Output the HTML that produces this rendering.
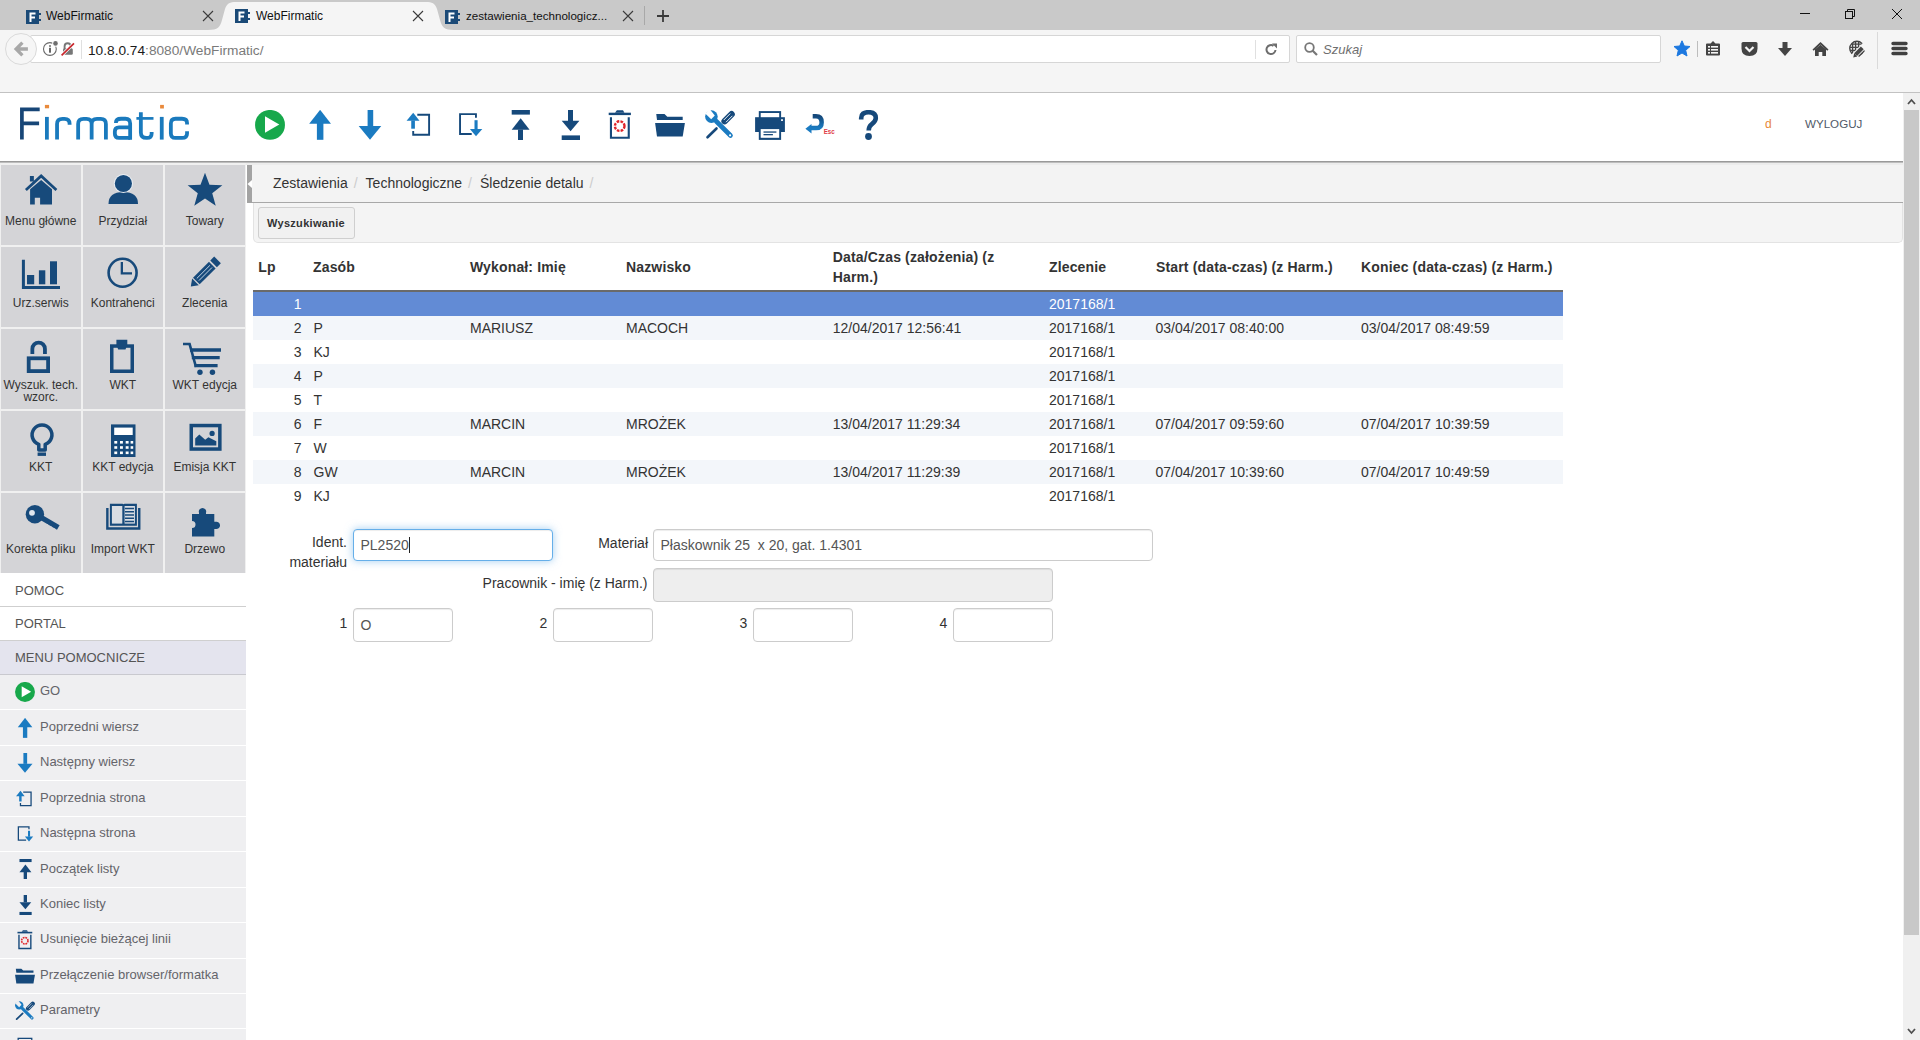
<!DOCTYPE html>
<html><head><meta charset="utf-8">
<style>
*{box-sizing:border-box;margin:0;padding:0}
html,body{width:1920px;height:1040px;overflow:hidden;background:#fff;font-family:"Liberation Sans",sans-serif;color:#333}
.a{position:absolute}
.t{position:absolute;white-space:nowrap}
svg{position:absolute;overflow:visible}
/* chrome */
#tabbar{left:0;top:0;width:1920px;height:30px;background:#c9c9c9}
#toolbar{left:0;top:30px;width:1920px;height:63px;background:#f5f5f5;border-bottom:1px solid #c2c2c2}
.tabtxt{font-size:12px;line-height:14px;color:#111}
/* header */
#hdrline{left:0;top:161px;width:1903px;height:2px;background:linear-gradient(#999 0,#999 50%,#bdbdbd 50%,#bdbdbd 100%)}
#hdrgap{left:0;top:163px;width:1903px;height:2px;background:#ececec}
/* scrollbar */
#sb{left:1903px;top:93px;width:17px;height:947px;background:#f0f0f0}
#sbthumb{left:1904px;top:110px;width:15px;height:825px;background:#c8c8c8}
/* sidebar */
#side{left:0;top:163px;width:246px;height:877px;background:#f0f0f0}
.tile{position:absolute;width:79.5px;height:79.5px;background:#d4d4d7}
.tl{position:absolute;left:0;width:100%;text-align:center;font-size:12px;line-height:12px;color:#333;white-space:nowrap}
.mrow{position:absolute;left:0;width:246px;font-size:13px;color:#555;white-space:nowrap}
.mi{position:absolute;left:0;width:246px;height:34.4px;background:#efeff1;font-size:13px;color:#5a5a5f;white-space:nowrap}
.mi span{position:absolute;left:40px;top:10px;line-height:14px}
/* content */
th,td{font-size:14px}
</style></head><body>

<!-- ============ BROWSER CHROME ============ -->
<div id="tabbar" class="a"></div>
<!-- active tab -->
<svg style="left:0;top:0" width="700" height="31" viewBox="0 0 700 31">
  <path d="M208 30 C218 30 220 27 222 20 L225 9 C227 3 230 2 236 2 L426 2 C432 2 435 3 437 9 L440 20 C442 27 444 30 454 30 Z" fill="#f5f5f5"/>
  <line x1="644.5" y1="6" x2="644.5" y2="25" stroke="#a8a8a8" stroke-width="1"/>
</svg>
<div id="toolbar" class="a"></div>

<!-- favicons -->
<svg style="left:26px;top:10px" width="15" height="14" viewBox="0 0 15 14"><rect x="0" y="0" width="13" height="14" fill="#1b4a77"/><rect x="13" y="3" width="2" height="2" fill="#1b4a77"/><rect x="13" y="9" width="2" height="2" fill="#1b4a77"/><path d="M3.5 2.5h6v2h-4v2h3.5v2h-3.5v3.5h-2z" fill="#fff"/></svg>
<svg style="left:235px;top:9px" width="15" height="14" viewBox="0 0 15 14"><rect x="0" y="0" width="13" height="14" fill="#1b4a77"/><rect x="13" y="3" width="2" height="2" fill="#1b4a77"/><rect x="13" y="9" width="2" height="2" fill="#1b4a77"/><path d="M3.5 2.5h6v2h-4v2h3.5v2h-3.5v3.5h-2z" fill="#fff"/></svg>
<svg style="left:445px;top:10px" width="15" height="14" viewBox="0 0 15 14"><rect x="0" y="0" width="13" height="14" fill="#1b4a77"/><rect x="13" y="3" width="2" height="2" fill="#1b4a77"/><rect x="13" y="9" width="2" height="2" fill="#1b4a77"/><path d="M3.5 2.5h6v2h-4v2h3.5v2h-3.5v3.5h-2z" fill="#fff"/></svg>
<div class="t tabtxt" style="left:46px;top:9px">WebFirmatic</div>
<div class="t tabtxt" style="left:256px;top:9px">WebFirmatic</div>
<div class="t tabtxt" style="left:466px;top:9px;font-size:11.6px">zestawienia_technologicz...</div>
<!-- tab close X -->
<svg style="left:203px;top:11px" width="10" height="10" viewBox="0 0 10 10"><path d="M0 0L10 10M10 0L0 10" stroke="#3a3a3a" stroke-width="1.1"/></svg>
<svg style="left:413px;top:11px" width="10" height="10" viewBox="0 0 10 10"><path d="M0 0L10 10M10 0L0 10" stroke="#3a3a3a" stroke-width="1.1"/></svg>
<svg style="left:623px;top:11px" width="10" height="10" viewBox="0 0 10 10"><path d="M0 0L10 10M10 0L0 10" stroke="#3a3a3a" stroke-width="1.1"/></svg>
<!-- new tab + -->
<svg style="left:656px;top:9px" width="14" height="14" viewBox="0 0 14 14"><path d="M7 1V13M1 7H13" stroke="#3a3a3a" stroke-width="1.8"/></svg>
<!-- window controls -->
<svg style="left:1800px;top:8px" width="104" height="12" viewBox="0 0 104 12">
  <line x1="0" y1="5.5" x2="10" y2="5.5" stroke="#111" stroke-width="1"/>
  <rect x="45.5" y="3.5" width="7" height="7" fill="none" stroke="#111" stroke-width="1"/>
  <path d="M47.5 3.5V1.5H54.5V8.5H52.5" fill="none" stroke="#111" stroke-width="1"/>
  <path d="M92 1L102 11M102 1L92 11" stroke="#111" stroke-width="1"/>
</svg>

<!-- nav bar -->
<div class="a" style="left:30px;top:35px;width:1260px;height:28px;background:#fff;border:1px solid #d6d6d6;border-radius:2px"></div>
<div class="a" style="left:5px;top:33px;width:32px;height:32px;border-radius:50%;background:#f6f6f6;border:1px solid #dadada"></div>
<svg style="left:13px;top:40px" width="16" height="18" viewBox="0 0 16 18"><path d="M14.9 9H4.5M9.4 2.6L3.1 9L9.4 15.4" fill="none" stroke="#a8a8a8" stroke-width="3.3"/></svg>
<svg style="left:43px;top:41px" width="34" height="18" viewBox="0 0 34 18">
  <circle cx="6.9" cy="8" r="6.4" fill="none" stroke="#6a6a6a" stroke-width="1.1"/>
  <circle cx="12.5" cy="2.4" r="3.3" fill="#fff"/>
  <circle cx="12.5" cy="2.4" r="2.3" fill="#6f6f6f"/>
  <rect x="6" y="4.3" width="2" height="1.4" fill="#666"/><rect x="6" y="6.8" width="2" height="4.9" fill="#666"/>
  <path d="M21.6 8V5.2Q21.6 2.3 24.6 2.3Q27.6 2.3 27.6 5.2V8" fill="none" stroke="#777" stroke-width="1.9"/>
  <rect x="20" y="7.5" width="9.8" height="6.3" rx="1.3" fill="#777"/>
  <path d="M18.3 14.6L31.2 2.2" stroke="#fff" stroke-width="3.2"/>
  <path d="M18.6 14.4L31 2.4" stroke="#c8262c" stroke-width="1.7"/>
</svg>
<div class="a" style="left:81px;top:40px;width:1px;height:19px;background:#e0e0e0"></div>
<div class="t" style="left:88px;top:43px;font-size:13.7px;line-height:16px;color:#1a1a1a">10.8.0.74<span style="color:#7a7a7a">:8080/WebFirmatic/</span></div>
<div class="a" style="left:1255px;top:40px;width:1px;height:19px;background:#e0e0e0"></div>
<svg style="left:1265px;top:43px" width="13" height="13" viewBox="0 0 13 13"><path d="M10.5 7A4.5 4.5 0 1 1 8.5 2.8" fill="none" stroke="#6d6d6d" stroke-width="2"/><path d="M7 0.5L12 0.5L12 5.5Z" fill="#6d6d6d"/></svg>
<div class="a" style="left:1296px;top:35px;width:365px;height:28px;background:#fff;border:1px solid #d6d6d6;border-radius:2px"></div>
<svg style="left:1304px;top:42px" width="14" height="14" viewBox="0 0 14 14"><circle cx="5.5" cy="5.5" r="4.3" fill="none" stroke="#777" stroke-width="1.8"/><line x1="8.5" y1="8.5" x2="13" y2="13" stroke="#777" stroke-width="2.2"/></svg>
<div class="t" style="left:1323px;top:42px;font-size:13px;line-height:16px;font-style:italic;color:#6f6f6f">Szukaj</div>
<!-- toolbar right icons -->
<svg style="left:1673px;top:40px" width="18" height="18" viewBox="0 0 18 18"><path d="M9 0.8 L11.3 6 L17 6.5 L12.7 10.3 L14 16 L9 13 L4 16 L5.3 10.3 L1 6.5 L6.7 6 Z" fill="#1c78e0" stroke="#1c78e0" stroke-width="1" stroke-linejoin="round"/></svg>
<div class="a" style="left:1697px;top:41px;width:1px;height:16px;background:#bdbdbd"></div>
<svg style="left:1705px;top:41px" width="16" height="16" viewBox="0 0 16 16"><path d="M1 3.5Q1 2.5 2 2.5H5.5L8 0L10.5 2.5H14Q15 2.5 15 3.5V13.5Q15 14.5 14 14.5H2Q1 14.5 1 13.5Z" fill="#444"/><rect x="3" y="5" width="2" height="1.6" fill="#f5f5f5"/><rect x="6" y="5" width="7" height="1.6" fill="#f5f5f5"/><rect x="3" y="8" width="2" height="1.6" fill="#f5f5f5"/><rect x="6" y="8" width="7" height="1.6" fill="#f5f5f5"/><rect x="3" y="11" width="2" height="1.6" fill="#f5f5f5"/><rect x="6" y="11" width="7" height="1.6" fill="#f5f5f5"/></svg>
<svg style="left:1741px;top:42px" width="17" height="15" viewBox="0 0 17 15"><path d="M0.5 1.5Q0.5 0 2 0H15Q16.5 0 16.5 1.5V6.5Q16.5 14 8.5 14Q0.5 14 0.5 6.5Z" fill="#444"/><path d="M4.5 5L8.5 9L12.5 5" fill="none" stroke="#f5f5f5" stroke-width="2.2"/></svg>
<svg style="left:1777px;top:42px" width="16" height="15" viewBox="0 0 16 15"><path d="M5.5 0H10.5V6H15L8 14L1 6H5.5Z" fill="#444"/></svg>
<svg style="left:1812px;top:41px" width="17" height="16" viewBox="0 0 17 16"><path d="M8.5 1L16.5 8.5L15.3 9.7L8.5 3.5L1.7 9.7L0.5 8.5Z" fill="#444"/><path d="M3 8.2L8.5 3.7L14 8.2V15H10.3V11H6.7V15H3Z" fill="#444"/></svg>
<svg style="left:1848px;top:40px" width="18" height="18" viewBox="0 0 18 18">
  <clipPath id="gclip"><circle cx="8.9" cy="8.4" r="7"/></clipPath>
  <circle cx="8.9" cy="8.4" r="7.1" fill="none" stroke="#444" stroke-width="1.4"/>
  <g clip-path="url(#gclip)" stroke="#444" stroke-width="1.4"><path d="M4.6 0V18M7.6 0V18M10.6 0V18M0 4.1H18M0 7.4H18M0 10.5H18"/></g>
  <path d="M3 19.5L18 4.5" stroke="#f5f5f5" stroke-width="6.5"/>
  <path d="M10.6 16.5L16.5 10.6" stroke="#444" stroke-width="1.3"/>
  <path d="M7.6 14.6L14.3 7.9" stroke="#444" stroke-width="4"/>
  <path d="M5.2 17.6L6.2 13.3L9.3 16.4Z" fill="#444"/>
</svg>
<div class="a" style="left:1877px;top:32px;width:1px;height:37px;background:#dadada"></div>
<svg style="left:1891px;top:41px" width="17" height="15" viewBox="0 0 17 15"><path d="M2 2.5H15M2 7.5H15M2 12.5H15" stroke="#3f3f3f" stroke-width="3.4" stroke-linecap="round"/></svg>

<!-- ============ PAGE ============ -->
<div id="sb" class="a"></div>
<div id="sbthumb" class="a"></div>
<svg style="left:1907px;top:98px" width="9" height="7" viewBox="0 0 9 7"><path d="M1 6L4.5 2L8 6" fill="none" stroke="#505050" stroke-width="1.8"/></svg>
<svg style="left:1907px;top:1028px" width="9" height="7" viewBox="0 0 9 7"><path d="M1 1L4.5 5L8 1" fill="none" stroke="#505050" stroke-width="1.8"/></svg>

<div id="hdrline" class="a"></div>
<div id="hdrgap" class="a"></div>


<!-- ============ APP HEADER ============ -->
<svg style="left:0;top:0" width="900" height="160" viewBox="0 0 900 160">
  <g fill="none" stroke-width="3.8">
    <path d="M21.9 139.6V109.4H39.7M21.9 123.4H39.1" stroke="#174677" stroke-width="3.7"/>
    <g stroke="#1a7abd">
      <path d="M46.9 116.9V139.6"/>
      <path d="M57.05 139.6V124Q57.05 118.8 62.5 118.8H64.5Q69.6 118.8 69.6 123.8V124.7"/>
      <path d="M78.15 139.6V124Q78.15 118.8 83.5 118.8H86.5Q91.65 118.8 91.65 124V139.6M91.65 124Q91.65 118.8 97 118.8H100.8Q105.9 118.8 105.9 124V139.6"/>
      <path d="M115.95 123V122.5Q115.95 118.75 121 118.75H125.5Q130.15 118.75 130.15 123.5V139.85"/>
      <path d="M130.15 127.35H119Q114.85 127.35 114.85 131.5V133.8Q114.85 137.95 119 137.95H130.15"/>
      <path d="M140.85 112.2V132.5Q140.85 137.95 146.5 137.95H147Q151.65 137.95 151.65 133.5V131.9"/>
      <path d="M136.4 118.4H153.5" stroke-width="2.7"/>
      <path d="M161.75 116.9V139.6"/>
      <path d="M187.05 124.6V123Q187.05 118.75 182 118.75H175.5Q170.85 118.75 170.85 123.5V133.2Q170.85 137.95 175.5 137.95H182Q187.05 137.95 187.05 133.5V131.2"/>
    </g>
  </g>
  <rect x="44.9" y="104.9" width="4.2" height="3.4" fill="#e98a3c"/>
  <rect x="160.1" y="104.9" width="3.8" height="3.6" fill="#e98a3c"/>
</svg>

<svg width="0" height="0" style="position:absolute">
 <defs>
  <symbol id="i-go" viewBox="0 0 30 30"><circle cx="15" cy="14.9" r="14.95" fill="#17a84b"/><path d="M10 6.3L24.3 14.6L10 22.7Z" fill="#fff"/></symbol>
  <symbol id="i-up" viewBox="0 0 30 30"><path d="M4.2 13.7L15.1 -0.2L26 13.7Z" fill="#1b7bc1"/><rect x="11.9" y="13" width="6.5" height="16.8" fill="#1b7bc1"/></symbol>
  <symbol id="i-down" viewBox="0 0 30 30"><rect x="12.6" y="-0.2" width="5.6" height="16.5" fill="#1b7bc1"/><path d="M3.7 16L26.25 16L15 29.8Z" fill="#1b7bc1"/></symbol>
  <symbol id="i-pgup" viewBox="0 0 30 30"><path d="M12.3 4.8H24.1V24.8H8.2V21" fill="none" stroke="#16497b" stroke-width="1.9"/><path d="M1.6 10.7L8.2 2.7L14.5 10.7Z" fill="#1b7bc1"/><rect x="6.25" y="10.5" width="3.65" height="8.2" fill="#1b7bc1"/></symbol>
  <symbol id="i-pgdn" viewBox="0 0 30 30"><path d="M20.95 7.7V4.15H5.05V24.05H16.7" fill="none" stroke="#16497b" stroke-width="1.9"/><rect x="19.5" y="10.2" width="3.1" height="8.9" fill="#1b7bc1"/><path d="M14.9 18.9L27.3 18.9L21 26.2Z" fill="#1b7bc1"/></symbol>
  <symbol id="i-top" viewBox="0 0 30 30"><rect x="6.7" y="-0.1" width="18.2" height="4.7" fill="#16497b"/><path d="M6.7 19.7L15.65 8.2L24.6 19.7Z" fill="#16497b"/><rect x="13" y="19.5" width="5" height="10.5" fill="#16497b"/></symbol>
  <symbol id="i-end" viewBox="0 0 30 30"><rect x="13" y="0" width="5" height="11" fill="#16497b"/><path d="M6.7 10.8L24.4 10.8L15.55 21.25Z" fill="#16497b"/><rect x="6.7" y="25.4" width="18.3" height="4.6" fill="#16497b"/></symbol>
  <symbol id="i-trash" viewBox="0 0 30 30"><path d="M10 2.75L11.9 0.2H18L19.4 2.75Z" fill="#16497b"/><rect x="3.7" y="2.7" width="22.2" height="2.4" fill="#16497b"/><path d="M5.95 7.2V27.7H23.75V7.2" fill="none" stroke="#16497b" stroke-width="2.1"/><circle cx="14.7" cy="16.1" r="4.8" fill="none" stroke="#e0252a" stroke-width="2.4" stroke-dasharray="2.6 1.2"/></symbol>
  <symbol id="i-folder" viewBox="0 0 30 30"><path d="M1.25 4.1H9.5L12.3 6.7H27.7V10H2Z" fill="#16497b"/><path d="M0.1 13H29.9L27.7 26.4H2Z" fill="#16497b"/></symbol>
  <symbol id="i-tools" viewBox="0 0 30 30">
    <mask id="wmask" maskUnits="userSpaceOnUse" x="-5" y="-5" width="40" height="40"><rect x="-5" y="-5" width="40" height="40" fill="#fff"/><path d="M4.6 -1L0.2 3.4L6.2 9.2L9.8 5.6Z" fill="#000"/><circle cx="25.1" cy="25.3" r="1.1" fill="#000"/></mask>
    <mask id="smask" maskUnits="userSpaceOnUse" x="-5" y="-5" width="40" height="40"><rect x="-5" y="-5" width="40" height="40" fill="#fff"/><path d="M18.8 10L25.2 3.6M21 12.2L27.4 5.8" stroke="#000" stroke-width="0.9"/></mask>
    <path d="M2.5 27.3L11.5 18.5" stroke="#16497b" stroke-width="2.6" stroke-linecap="round"/>
    <path d="M19.6 11.2L26.6 4.2" stroke="#16497b" stroke-width="6.4" stroke-linecap="round" mask="url(#smask)"/>
    <g mask="url(#wmask)" fill="#1b7bc1"><path d="M11 11L25.5 25.5" stroke="#1b7bc1" stroke-width="4.6" stroke-linecap="round"/><circle cx="6.4" cy="6.6" r="6.3"/></g>
  </symbol>
  <symbol id="i-print" viewBox="0 0 30 30"><rect x="4.75" y="2.05" width="20.4" height="7" fill="none" stroke="#16497b" stroke-width="1.9"/><rect x="0.1" y="7.2" width="29.8" height="14.8" fill="#16497b"/><rect x="26.1" y="9.2" width="1.8" height="1.8" fill="#fff"/><rect x="3.8" y="18" width="22.3" height="11.9" fill="#16497b"/><rect x="5.7" y="19.1" width="18.5" height="8.7" fill="#fff"/><rect x="8.5" y="21.4" width="12.9" height="1.3" fill="#16497b"/><rect x="8.5" y="24" width="9.4" height="1.3" fill="#16497b"/></symbol>
  <linearGradient id="ug" x1="0" y1="0" x2="0" y2="1"><stop offset="0" stop-color="#16497b"/><stop offset="1" stop-color="#1b7bc1"/></linearGradient>
  <symbol id="i-undo" viewBox="0 0 30 30" overflow="visible"><path d="M7.7 6.35H11Q16.65 6.35 16.65 12.4Q16.65 18.05 11 18.05H6" fill="none" stroke="url(#ug)" stroke-width="4.5"/><path d="M0.4 18.7L6.5 14L6.5 23.6Z" fill="#1b7bc1"/><text x="18.7" y="24.3" font-family="Liberation Sans" font-weight="bold" font-size="6.6" fill="#e03a45" textLength="11" lengthAdjust="spacingAndGlyphs">Esc</text></symbol>
  <symbol id="i-help" viewBox="0 0 30 30"><path d="M6.2 9.6V8Q6.2 2.2 13.5 2.2Q20.8 2.2 20.8 8Q20.8 11.3 16.6 14.4Q13.7 16.6 13.7 20.6" fill="none" stroke="#16497b" stroke-width="4.6"/><circle cx="13.5" cy="26.5" r="3.4" fill="#16497b"/></symbol>
 </defs>
</svg>
<svg style="left:255px;top:110px" width="30" height="30"><use href="#i-go"/></svg>
<svg style="left:305px;top:110px" width="30" height="30"><use href="#i-up"/></svg>
<svg style="left:355px;top:110px" width="30" height="30"><use href="#i-down"/></svg>
<svg style="left:405px;top:110px" width="30" height="30"><use href="#i-pgup"/></svg>
<svg style="left:455px;top:110px" width="30" height="30"><use href="#i-pgdn"/></svg>
<svg style="left:505px;top:110px" width="30" height="30"><use href="#i-top"/></svg>
<svg style="left:555px;top:110px" width="30" height="30"><use href="#i-end"/></svg>
<svg style="left:605px;top:110px" width="30" height="30"><use href="#i-trash"/></svg>
<svg style="left:655px;top:110px" width="30" height="30"><use href="#i-folder"/></svg>
<svg style="left:705px;top:110px" width="30" height="30"><use href="#i-tools"/></svg>
<svg style="left:755px;top:110px" width="30" height="30"><use href="#i-print"/></svg>
<svg style="left:805px;top:110px" width="30" height="30"><use href="#i-undo"/></svg>
<svg style="left:855px;top:110px" width="30" height="30"><use href="#i-help"/></svg>

<div class="t" style="left:1765px;top:116.7px;font-size:12px;line-height:14px;color:#e8873a">d</div>
<div class="t" style="left:1805px;top:116.7px;font-size:11.6px;line-height:14px;color:#505a68">WYLOGUJ</div>

<!-- ============ SIDEBAR ============ -->
<div id="side" class="a"></div>
<div class="tile" style="left:1px;top:165px"><div class="tl" style="top:50px">Menu główne</div></div>
<div class="tile" style="left:83px;top:165px"><div class="tl" style="top:50px">Przydział</div></div>
<div class="tile" style="left:165px;top:165px"><div class="tl" style="top:50px">Towary</div></div>
<div class="tile" style="left:1px;top:247px"><div class="tl" style="top:50px">Urz.serwis</div></div>
<div class="tile" style="left:83px;top:247px"><div class="tl" style="top:50px">Kontrahenci</div></div>
<div class="tile" style="left:165px;top:247px"><div class="tl" style="top:50px">Zlecenia</div></div>
<div class="tile" style="left:1px;top:329px"><div class="tl" style="top:49.8px;line-height:12.6px">Wyszuk. tech.<br>wzorc.</div></div>
<div class="tile" style="left:83px;top:329px"><div class="tl" style="top:50px">WKT</div></div>
<div class="tile" style="left:165px;top:329px"><div class="tl" style="top:50px">WKT edycja</div></div>
<div class="tile" style="left:1px;top:411px"><div class="tl" style="top:50px">KKT</div></div>
<div class="tile" style="left:83px;top:411px"><div class="tl" style="top:50px">KKT edycja</div></div>
<div class="tile" style="left:165px;top:411px"><div class="tl" style="top:50px">Emisja KKT</div></div>
<div class="tile" style="left:1px;top:493px"><div class="tl" style="top:50px">Korekta pliku</div></div>
<div class="tile" style="left:83px;top:493px"><div class="tl" style="top:50px">Import WKT</div></div>
<div class="tile" style="left:165px;top:493px"><div class="tl" style="top:50px">Drzewo</div></div>
<svg style="left:0;top:0" width="246" height="580" viewBox="0 0 246 580">
 <g fill="#174a7b">
  <!-- home -->
  <path d="M25.9 189.9L41.15 175.9L56.4 189.9" fill="none" stroke="#174a7b" stroke-width="2.7"/>
  <rect x="29.9" y="176" width="3.95" height="5.5"/>
  <path d="M30.1 189.2L41.15 180L52 189.2V204.4H40.1V197.7H34.8V204.4H30.1Z"/>
  <!-- person -->
  <path d="M108.5 203.9Q108.5 192 123.25 192Q138 192 138 203.9Z"/>
  <circle cx="123.4" cy="183.5" r="9.6" fill="#e9eef3"/>
  <circle cx="123.4" cy="183.5" r="8.6"/>
  <!-- star -->
  <path d="M205.00 172.70 L209.47 184.79 L222.35 185.30 L212.23 193.29 L215.72 205.70 L205.00 198.54 L194.28 205.70 L197.77 193.29 L187.65 185.30 L200.53 184.79Z"/>
  <!-- chart -->
  <path d="M23.4 259.8V287.6H60" fill="none" stroke="#174a7b" stroke-width="3"/>
  <rect x="27" y="275" width="7.2" height="9.3"/><rect x="38.9" y="270.3" width="6.4" height="14"/><rect x="50" y="261.3" width="7" height="23"/>
  <!-- clock -->
  <circle cx="122.6" cy="272.7" r="14" fill="none" stroke="#174a7b" stroke-width="2.6"/>
  <path d="M121.85 262V273.45H132" fill="none" stroke="#174a7b" stroke-width="2.3"/>
  <!-- pencil -->
  <g transform="translate(190.8 286.6) rotate(-45)">
    <path d="M0 0L6.6 -4.7V4.7Z"/>
    <rect x="7.85" y="-4.7" width="22.55" height="9.4"/>
    <rect x="32.2" y="-4.7" width="5.6" height="9.4"/>
    <path d="M10 -1.5H28.5M10 1.5H28.5" stroke="#cddbea" stroke-width="0.9"/>
  </g>
  <!-- lock -->
  <path d="M32.35 354V348.9A6.3 6.3 0 0 1 44.95 348.9V354" fill="none" stroke="#174a7b" stroke-width="3.8"/>
  <rect x="28.7" y="358.3" width="19.4" height="12.8" fill="none" stroke="#174a7b" stroke-width="3.8"/>
  <!-- clipboard -->
  <rect x="111.75" y="346.05" width="20.5" height="25.2" fill="none" stroke="#174a7b" stroke-width="3.5"/>
  <path d="M116.4 339.8H127.3V344.5L125.5 349.4H118.2L116.4 344.5Z"/>
  <!-- cart -->
  <path d="M183 344.05H189.6L196 367" fill="none" stroke="#174a7b" stroke-width="2.6"/>
  <path d="M190 350H221M191.8 357.7H219.7M194.4 365.6H217.6" fill="none" stroke="#174a7b" stroke-width="3.3"/>
  <circle cx="199.95" cy="372.25" r="2.7"/><circle cx="212.45" cy="372.25" r="2.7"/>
  <!-- bulb -->
  <path d="M38.8 449.9V444.3A9.9 9.9 0 1 1 45.2 444.3V449.9Z" fill="none" stroke="#174a7b" stroke-width="3.5" stroke-linejoin="round"/>
  <rect x="37.6" y="452.5" width="8.4" height="3.4"/>
  <!-- calculator -->
  <rect x="111" y="424.4" width="24.5" height="32.6"/>
  <rect x="114.2" y="427.6" width="18.5" height="7.4" fill="#fff"/>
  <g fill="#fff">
   <rect x="114.3" y="441" width="2.9" height="2.6"/><rect x="120" y="441" width="2.9" height="2.6"/><rect x="125.7" y="441" width="2.9" height="2.6"/><rect x="130.6" y="441" width="2.6" height="2.6"/>
   <rect x="114.3" y="446.2" width="2.9" height="2.6"/><rect x="120" y="446.2" width="2.9" height="2.6"/><rect x="125.7" y="446.2" width="2.9" height="2.6"/><rect x="130.6" y="446.2" width="2.6" height="2.6"/>
   <rect x="114.3" y="451.5" width="2.9" height="2.6"/><rect x="120" y="451.5" width="2.9" height="2.6"/><rect x="125.7" y="451.5" width="2.9" height="2.6"/><rect x="130.6" y="451.5" width="2.6" height="2.6"/>
  </g>
  <!-- picture -->
  <rect x="191.25" y="425.55" width="28.6" height="23.5" fill="none" stroke="#174a7b" stroke-width="3.5"/>
  <path d="M195.2 445.5V438.5L199.3 434.6L205.2 439.8L208.4 437.2L216.3 441.2V445.5Z"/>
  <circle cx="212.1" cy="433.4" r="2.6"/>
  <!-- key -->
  <circle cx="34.9" cy="514.3" r="9.2"/>
  <circle cx="32" cy="512.8" r="2.9" fill="#dfe6ee"/>
  <path d="M40 516.8L58.3 527.6" stroke="#174a7b" stroke-width="5.2"/>
  <path d="M47.3 524.3V526M50.8 526.3V528M54.5 528.5V530" stroke="#d4d4d7" stroke-width="1.3"/>
  <!-- book -->
  <path d="M107.35 508V528.45H139.25V508" fill="none" stroke="#174a7b" stroke-width="2.4"/>
  <path d="M109.9 503.8H122.5Q123.5 504.6 124.5 503.8H136.9V525.7H109.9Z"/>
  <rect x="111.9" y="506" width="10.4" height="17.6" fill="#d9dde3"/>
  <rect x="124.6" y="506" width="10.3" height="17.6" fill="#d9dde3"/>
  <path d="M125 508.6H134M125 511.8H134M125 515.05H134M125 518.3H134M125 521.5H134" stroke="#174a7b" stroke-width="1.5"/>
  <!-- puzzle -->
  <path d="M192 514H199V512.8A3.7 3.7 0 1 1 206 512.8V514H214.3V521.8H215.5A3.7 3.7 0 1 1 215.5 529H214.3V536.4H192V528A3.5 3.5 0 1 0 192 521Z"/>
 </g>
</svg>

<div class="a" style="left:0;top:573px;width:246px;height:467px;background:#fff"></div>
<div class="a" style="left:0;top:573px;width:246px;height:34px;background:#fff;border-bottom:1px solid #cfcfcf"></div>
<div class="t" style="left:15px;top:583px;font-size:13px;line-height:15px;color:#555">POMOC</div>
<div class="a" style="left:0;top:607px;width:246px;height:34px;background:#fff;border-bottom:1px solid #cfcfcf"></div>
<div class="t" style="left:15px;top:615.5px;font-size:13px;line-height:15px;color:#555">PORTAL</div>
<div class="a" style="left:0;top:641px;width:246px;height:34px;background:#e4e4ee;border-bottom:1px solid #c9c9cf"></div>
<div class="t" style="left:15px;top:649.6px;font-size:13px;line-height:15px;color:#555">MENU POMOCNICZE</div>
<div class="a" style="left:0;top:675.00px;width:246px;height:34.44px;background:#efeff1"></div>
<svg style="left:15px;top:682.20px" width="20" height="20" viewBox="0 0 30 30"><use href="#i-go"/></svg>
<div class="t" style="left:40px;top:683.30px;font-size:13px;line-height:15px;color:#64646a">GO</div>
<div class="a" style="left:0;top:710.44px;width:246px;height:34.44px;background:#efeff1"></div>
<svg style="left:15px;top:717.64px" width="20" height="20" viewBox="0 0 30 30"><use href="#i-up"/></svg>
<div class="t" style="left:40px;top:718.74px;font-size:13px;line-height:15px;color:#64646a">Poprzedni wiersz</div>
<div class="a" style="left:0;top:745.88px;width:246px;height:34.44px;background:#efeff1"></div>
<svg style="left:15px;top:753.08px" width="20" height="20" viewBox="0 0 30 30"><use href="#i-down"/></svg>
<div class="t" style="left:40px;top:754.18px;font-size:13px;line-height:15px;color:#64646a">Następny wiersz</div>
<div class="a" style="left:0;top:781.32px;width:246px;height:34.44px;background:#efeff1"></div>
<svg style="left:15px;top:788.52px" width="20" height="20" viewBox="0 0 30 30"><use href="#i-pgup"/></svg>
<div class="t" style="left:40px;top:789.62px;font-size:13px;line-height:15px;color:#64646a">Poprzednia strona</div>
<div class="a" style="left:0;top:816.76px;width:246px;height:34.44px;background:#efeff1"></div>
<svg style="left:15px;top:823.96px" width="20" height="20" viewBox="0 0 30 30"><use href="#i-pgdn"/></svg>
<div class="t" style="left:40px;top:825.06px;font-size:13px;line-height:15px;color:#64646a">Następna strona</div>
<div class="a" style="left:0;top:852.20px;width:246px;height:34.44px;background:#efeff1"></div>
<svg style="left:15px;top:859.40px" width="20" height="20" viewBox="0 0 30 30"><use href="#i-top"/></svg>
<div class="t" style="left:40px;top:860.50px;font-size:13px;line-height:15px;color:#64646a">Początek listy</div>
<div class="a" style="left:0;top:887.64px;width:246px;height:34.44px;background:#efeff1"></div>
<svg style="left:15px;top:894.84px" width="20" height="20" viewBox="0 0 30 30"><use href="#i-end"/></svg>
<div class="t" style="left:40px;top:895.94px;font-size:13px;line-height:15px;color:#64646a">Koniec listy</div>
<div class="a" style="left:0;top:923.08px;width:246px;height:34.44px;background:#efeff1"></div>
<svg style="left:15px;top:930.28px" width="20" height="20" viewBox="0 0 30 30"><use href="#i-trash"/></svg>
<div class="t" style="left:40px;top:931.38px;font-size:13px;line-height:15px;color:#64646a">Usunięcie bieżącej linii</div>
<div class="a" style="left:0;top:958.52px;width:246px;height:34.44px;background:#efeff1"></div>
<svg style="left:15px;top:965.72px" width="20" height="20" viewBox="0 0 30 30"><use href="#i-folder"/></svg>
<div class="t" style="left:40px;top:966.82px;font-size:13px;line-height:15px;color:#64646a">Przełączenie browser/formatka</div>
<div class="a" style="left:0;top:993.96px;width:246px;height:34.44px;background:#efeff1"></div>
<svg style="left:15px;top:1001.16px" width="20" height="20" viewBox="0 0 30 30"><use href="#i-tools"/></svg>
<div class="t" style="left:40px;top:1002.26px;font-size:13px;line-height:15px;color:#64646a">Parametry</div>
<div class="a" style="left:0;top:1029.40px;width:246px;height:34.44px;background:#efeff1"></div>
<svg style="left:15px;top:1036.60px" width="20" height="20" viewBox="0 0 30 30"><use href="#i-print"/></svg>
<div class="t" style="left:40px;top:1037.70px;font-size:13px;line-height:15px;color:#64646a">Drukuj</div>


<!-- ============ CONTENT ============ -->
<div class="a" style="left:246px;top:165px;width:1657px;height:875px;background:#fff"></div>
<div class="a" style="left:252px;top:165px;width:1651px;height:38px;background:#f3f3f3;border-bottom:1px solid #a8a8a8"></div>
<div class="a" style="left:247px;top:165px;width:5px;height:38px;background:#a3a3a3"></div>
<svg style="left:246px;top:179px" width="7" height="10" viewBox="0 0 7 10"><path d="M6 1L1.5 5L6 9Z" fill="#fff"/></svg>
<div class="t" style="left:273px;top:173px;font-size:14px;line-height:20px;color:#333">Zestawienia<span style="color:#ccc;padding:0 8px 0 6px">/</span>Technologiczne<span style="color:#ccc;padding:0 8px 0 6px">/</span>Śledzenie detalu<span style="color:#ccc;padding:0 8px 0 6px">/</span></div>
<div class="a" style="left:253px;top:203px;width:1650px;height:40px;background:#f4f4f4;border:1px solid #e3e3e3;border-top:none;border-radius:0 0 5px 5px"></div>
<div class="a" style="left:258px;top:207px;width:97px;height:32px;background:#f1f1f1;border:1px solid #cfcfcf;border-radius:3px"></div>
<div class="t" style="left:267px;top:215.5px;font-size:11px;line-height:14px;font-weight:bold;color:#333;letter-spacing:0.3px">Wyszukiwanie</div>

<!-- table -->
<div class="a" style="left:253px;top:290px;width:1310px;height:2px;background:#6a6a6a"></div>
<div class="t" style="left:258.3px;top:256.95px;font-size:14px;line-height:20px;font-weight:bold;color:#333;letter-spacing:0.15px">Lp</div>
<div class="t" style="left:313px;top:256.95px;font-size:14px;line-height:20px;font-weight:bold;color:#333;letter-spacing:0.15px">Zasób</div>
<div class="t" style="left:470px;top:256.95px;font-size:14px;line-height:20px;font-weight:bold;color:#333;letter-spacing:0.15px">Wykonał: Imię</div>
<div class="t" style="left:626px;top:256.95px;font-size:14px;line-height:20px;font-weight:bold;color:#333;letter-spacing:0.15px">Nazwisko</div>
<div class="t" style="left:1049px;top:256.95px;font-size:14px;line-height:20px;font-weight:bold;color:#333;letter-spacing:0.15px">Zlecenie</div>
<div class="t" style="left:1156px;top:256.95px;font-size:14px;line-height:20px;font-weight:bold;color:#333;letter-spacing:0.15px">Start (data-czas) (z Harm.)</div>
<div class="t" style="left:1361px;top:256.95px;font-size:14px;line-height:20px;font-weight:bold;color:#333;letter-spacing:0.15px">Koniec (data-czas) (z Harm.)</div>
<div class="t" style="left:832.8px;top:247.05px;font-size:14px;line-height:20.3px;font-weight:bold;color:#333;letter-spacing:0.15px">Data/Czas (założenia) (z<br>Harm.)</div>
<div class="a" style="left:253px;top:292px;width:1310px;height:24px;background:#628bd5"></div>
<div class="t" style="left:253px;width:48.6px;text-align:right;top:294.00px;font-size:14px;line-height:20px;color:#fff">1</div>
<div class="t" style="left:1049px;top:294.00px;font-size:14px;line-height:20px;color:#fff">2017168/1</div>
<div class="a" style="left:253px;top:316px;width:1310px;height:24px;background:#f3f6fa"></div>
<div class="t" style="left:253px;width:48.6px;text-align:right;top:318.00px;font-size:14px;line-height:20px;color:#333">2</div>
<div class="t" style="left:313.5px;top:318.00px;font-size:14px;line-height:20px;color:#333">P</div>
<div class="t" style="left:470px;top:318.00px;font-size:14px;line-height:20px;color:#333">MARIUSZ</div>
<div class="t" style="left:626px;top:318.00px;font-size:14px;line-height:20px;color:#333">MACOCH</div>
<div class="t" style="left:832.8px;top:318.00px;font-size:14px;line-height:20px;color:#333">12/04/2017 12:56:41</div>
<div class="t" style="left:1049px;top:318.00px;font-size:14px;line-height:20px;color:#333">2017168/1</div>
<div class="t" style="left:1155.5px;top:318.00px;font-size:14px;line-height:20px;color:#333">03/04/2017 08:40:00</div>
<div class="t" style="left:1361px;top:318.00px;font-size:14px;line-height:20px;color:#333">03/04/2017 08:49:59</div>
<div class="a" style="left:253px;top:340px;width:1310px;height:24px;background:#fff"></div>
<div class="t" style="left:253px;width:48.6px;text-align:right;top:342.00px;font-size:14px;line-height:20px;color:#333">3</div>
<div class="t" style="left:313.5px;top:342.00px;font-size:14px;line-height:20px;color:#333">KJ</div>
<div class="t" style="left:1049px;top:342.00px;font-size:14px;line-height:20px;color:#333">2017168/1</div>
<div class="a" style="left:253px;top:364px;width:1310px;height:24px;background:#f3f6fa"></div>
<div class="t" style="left:253px;width:48.6px;text-align:right;top:366.00px;font-size:14px;line-height:20px;color:#333">4</div>
<div class="t" style="left:313.5px;top:366.00px;font-size:14px;line-height:20px;color:#333">P</div>
<div class="t" style="left:1049px;top:366.00px;font-size:14px;line-height:20px;color:#333">2017168/1</div>
<div class="a" style="left:253px;top:388px;width:1310px;height:24px;background:#fff"></div>
<div class="t" style="left:253px;width:48.6px;text-align:right;top:390.00px;font-size:14px;line-height:20px;color:#333">5</div>
<div class="t" style="left:313.5px;top:390.00px;font-size:14px;line-height:20px;color:#333">T</div>
<div class="t" style="left:1049px;top:390.00px;font-size:14px;line-height:20px;color:#333">2017168/1</div>
<div class="a" style="left:253px;top:412px;width:1310px;height:24px;background:#f3f6fa"></div>
<div class="t" style="left:253px;width:48.6px;text-align:right;top:414.00px;font-size:14px;line-height:20px;color:#333">6</div>
<div class="t" style="left:313.5px;top:414.00px;font-size:14px;line-height:20px;color:#333">F</div>
<div class="t" style="left:470px;top:414.00px;font-size:14px;line-height:20px;color:#333">MARCIN</div>
<div class="t" style="left:626px;top:414.00px;font-size:14px;line-height:20px;color:#333">MROŻEK</div>
<div class="t" style="left:832.8px;top:414.00px;font-size:14px;line-height:20px;color:#333">13/04/2017 11:29:34</div>
<div class="t" style="left:1049px;top:414.00px;font-size:14px;line-height:20px;color:#333">2017168/1</div>
<div class="t" style="left:1155.5px;top:414.00px;font-size:14px;line-height:20px;color:#333">07/04/2017 09:59:60</div>
<div class="t" style="left:1361px;top:414.00px;font-size:14px;line-height:20px;color:#333">07/04/2017 10:39:59</div>
<div class="a" style="left:253px;top:436px;width:1310px;height:24px;background:#fff"></div>
<div class="t" style="left:253px;width:48.6px;text-align:right;top:438.00px;font-size:14px;line-height:20px;color:#333">7</div>
<div class="t" style="left:313.5px;top:438.00px;font-size:14px;line-height:20px;color:#333">W</div>
<div class="t" style="left:1049px;top:438.00px;font-size:14px;line-height:20px;color:#333">2017168/1</div>
<div class="a" style="left:253px;top:460px;width:1310px;height:24px;background:#f3f6fa"></div>
<div class="t" style="left:253px;width:48.6px;text-align:right;top:462.00px;font-size:14px;line-height:20px;color:#333">8</div>
<div class="t" style="left:313.5px;top:462.00px;font-size:14px;line-height:20px;color:#333">GW</div>
<div class="t" style="left:470px;top:462.00px;font-size:14px;line-height:20px;color:#333">MARCIN</div>
<div class="t" style="left:626px;top:462.00px;font-size:14px;line-height:20px;color:#333">MROŻEK</div>
<div class="t" style="left:832.8px;top:462.00px;font-size:14px;line-height:20px;color:#333">13/04/2017 11:29:39</div>
<div class="t" style="left:1049px;top:462.00px;font-size:14px;line-height:20px;color:#333">2017168/1</div>
<div class="t" style="left:1155.5px;top:462.00px;font-size:14px;line-height:20px;color:#333">07/04/2017 10:39:60</div>
<div class="t" style="left:1361px;top:462.00px;font-size:14px;line-height:20px;color:#333">07/04/2017 10:49:59</div>
<div class="a" style="left:253px;top:484px;width:1310px;height:24px;background:#fff"></div>
<div class="t" style="left:253px;width:48.6px;text-align:right;top:486.00px;font-size:14px;line-height:20px;color:#333">9</div>
<div class="t" style="left:313.5px;top:486.00px;font-size:14px;line-height:20px;color:#333">KJ</div>
<div class="t" style="left:1049px;top:486.00px;font-size:14px;line-height:20px;color:#333">2017168/1</div>

<!-- form -->
<div class="t" style="left:247px;width:100px;text-align:right;top:533.25px;font-size:14px;line-height:19.6px;color:#333">Ident.<br>materiału</div>
<div class="a" style="left:353.4px;top:528.6px;width:199.3px;height:32.8px;background:#fff;border:1px solid #66afe9;border-radius:4px;box-shadow:inset 0 1px 1px rgba(0,0,0,.075),0 0 8px rgba(102,175,233,.6)"></div>
<div class="t" style="left:360.5px;top:534.85px;font-size:14px;line-height:20px;color:#555">PL2520</div>
<div class="a" style="left:409px;top:537px;width:1px;height:16px;background:#222"></div>
<div class="t" style="left:548px;width:100px;text-align:right;top:533.25px;font-size:14px;line-height:20px;color:#333">Materiał</div>
<div class="a" style="left:653.4px;top:528.6px;width:499.6px;height:32.8px;background:#fff;border:1px solid #ccc;border-radius:4px;box-shadow:inset 0 1px 1px rgba(0,0,0,.075)"></div>
<div class="t" style="left:660.5px;top:534.85px;font-size:14px;line-height:20px;color:#555;white-space:pre">Płaskownik 25  x 20, gat. 1.4301</div>
<div class="t" style="left:447.5px;width:200px;text-align:right;top:573.15px;font-size:14px;line-height:20px;color:#333">Pracownik - imię (z Harm.)</div>
<div class="a" style="left:653.4px;top:568.4px;width:399.6px;height:33.2px;background:#eee;border:1px solid #ccc;border-radius:4px;box-shadow:inset 0 1px 1px rgba(0,0,0,.075)"></div>
<div class="t" style="left:247.2px;width:100px;text-align:right;top:612.95px;font-size:14px;line-height:20px;color:#333">1</div>
<div class="a" style="left:353.4px;top:608.3px;width:99.3px;height:33.3px;background:#fff;border:1px solid #ccc;border-radius:4px;box-shadow:inset 0 1px 1px rgba(0,0,0,.075)"></div>
<div class="t" style="left:447.2px;width:100px;text-align:right;top:612.95px;font-size:14px;line-height:20px;color:#333">2</div>
<div class="a" style="left:553.4px;top:608.3px;width:99.3px;height:33.3px;background:#fff;border:1px solid #ccc;border-radius:4px;box-shadow:inset 0 1px 1px rgba(0,0,0,.075)"></div>
<div class="t" style="left:647.2px;width:100px;text-align:right;top:612.95px;font-size:14px;line-height:20px;color:#333">3</div>
<div class="a" style="left:753.4px;top:608.3px;width:99.3px;height:33.3px;background:#fff;border:1px solid #ccc;border-radius:4px;box-shadow:inset 0 1px 1px rgba(0,0,0,.075)"></div>
<div class="t" style="left:847.2px;width:100px;text-align:right;top:612.95px;font-size:14px;line-height:20px;color:#333">4</div>
<div class="a" style="left:953.4px;top:608.3px;width:99.3px;height:33.3px;background:#fff;border:1px solid #ccc;border-radius:4px;box-shadow:inset 0 1px 1px rgba(0,0,0,.075)"></div>
<div class="t" style="left:360.5px;top:615.35px;font-size:14px;line-height:20px;color:#555">O</div>

</body></html>
